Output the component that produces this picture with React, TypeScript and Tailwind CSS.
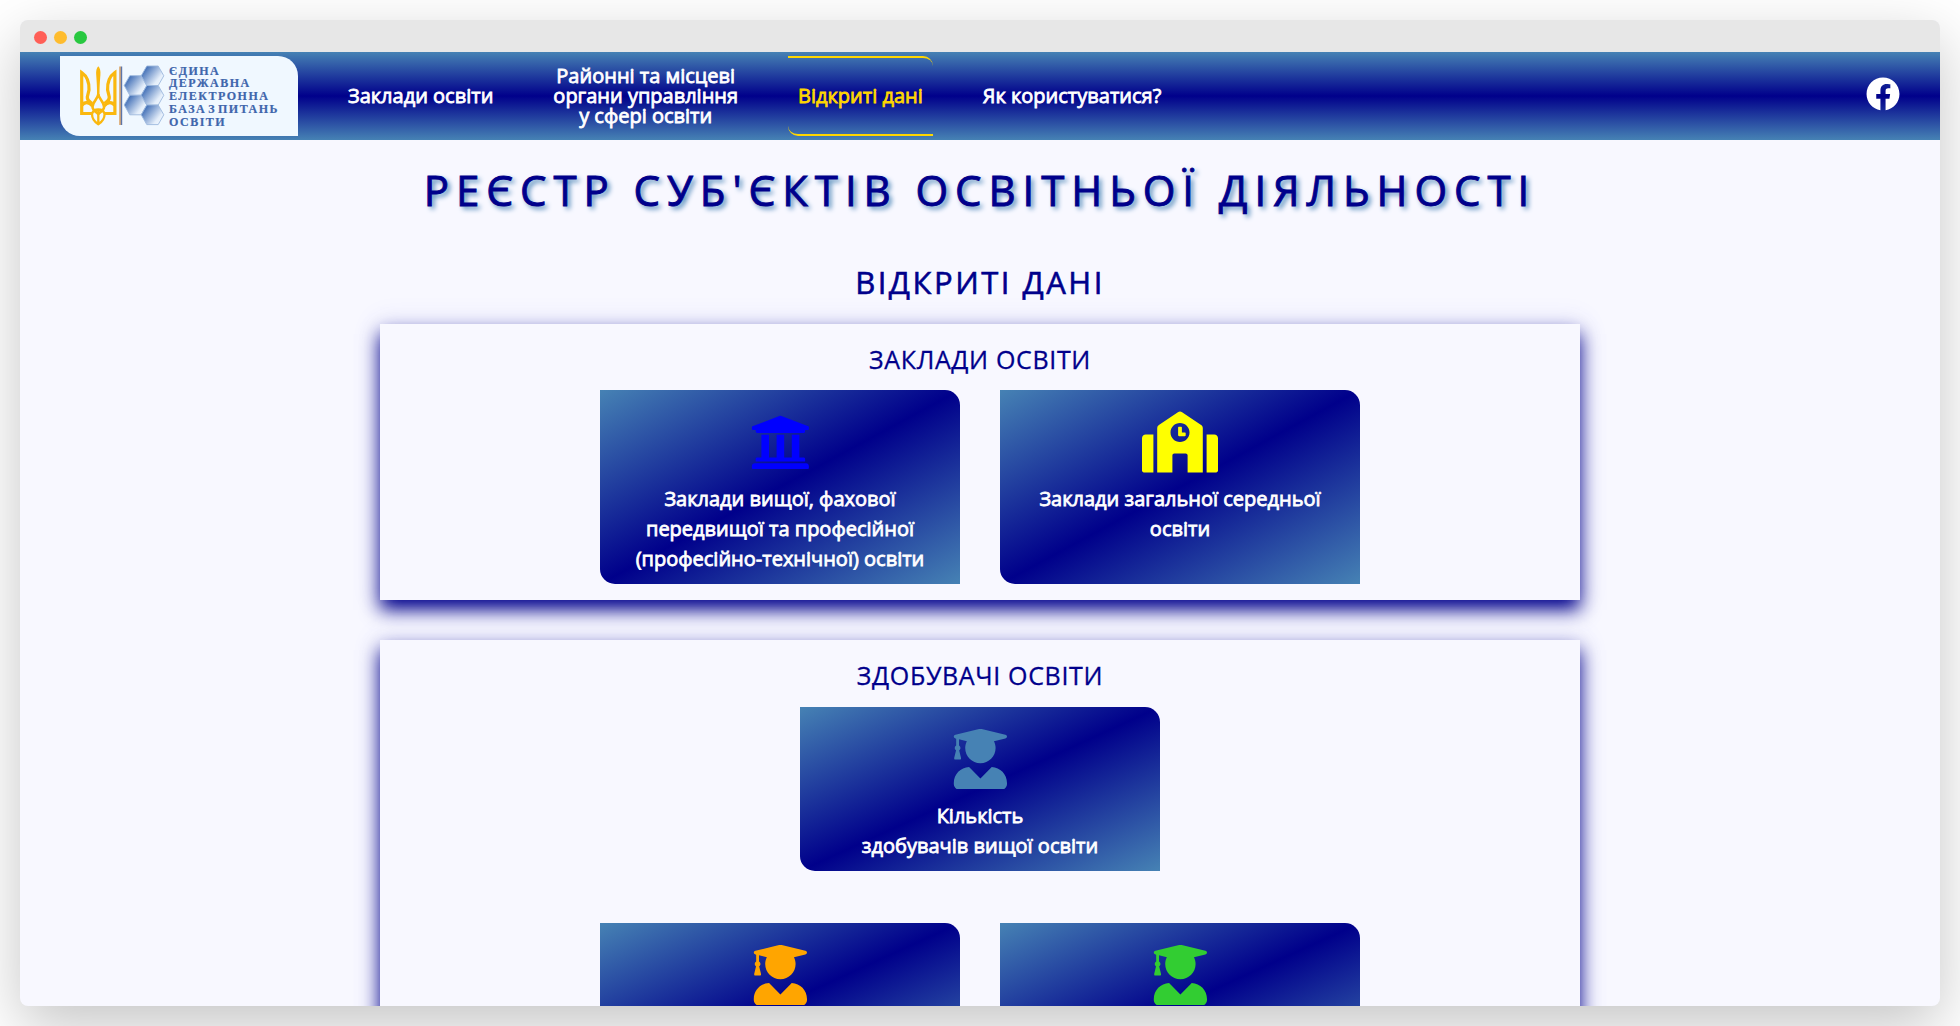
import type { ReactNode } from "react";
import { FaFacebook, FaSchool, FaUniversity, FaUserGraduate } from "react-icons/fa";

const HEXES = [
  [55.5, 20.5],
  [55.5, 40],
  [72.5, 10.8],
  [72.5, 30.3],
  [72.5, 49.8],
];

function Emblem() {
  return (
    <svg width="85" height="62" viewBox="0 0 85 62" className="shrink-0">
      <defs>
        <linearGradient id="hex" x1="0" y1="0.15" x2="1" y2="0.85">
          <stop offset="0.1" stopColor="#3f6db5" />
          <stop offset="0.75" stopColor="#e4eefa" />
          <stop offset="1" stopColor="#f2f8fe" />
        </linearGradient>
      </defs>
      <path
        d="M18.300 1.200C16.600 3 15.800 6 16.200 10C16.600 15 17.200 24 17 31H19.600C19.400 24 20 15 20.400 10C20.800 6 20 3 18.300 1.200Z"
        fill="#fab80f"
      />
      <g fill="none" stroke="#fab80f" strokeWidth="3.200" strokeLinejoin="miter">
        <path d="M18.300 29C18 34 12.500 37 12.500 42C12.500 45 16 47 18.300 49C20.600 47 24.100 45 24.100 42C24.100 37 18.600 34 18.300 29Z" strokeWidth="2.600" />
        <path d="M12.500 48.500H1.700V7.500C7.500 11.500 9.300 18 9 25L7.300 32C7 36 10.500 37 12 38.500M1.500 41C4 36.500 9 36.500 12.500 41" />
        <path d="M24.100 48.500H34.900V7.500C29.100 11.500 27.300 18 27.600 25L29.300 32C29.600 36 26.100 37 24.600 38.500M35.100 41C32.600 36.500 27.600 36.500 24.100 41" />
        <path d="M12 49C12 54 15.500 57.500 18.300 59.200C21.100 57.500 24.600 54 24.600 49C23 43 13.600 43 12 49ZM18.300 45V59" strokeWidth="2.300" />
      </g>
      <rect x="39.300" y="1.500" width="1.500" height="58.500" fill="#d79a55" />
      <rect x="40.800" y="1.500" width="1.400" height="58.500" fill="#5d76a8" />
      {HEXES.map(([x, y]) => (
        <path
          key={`${x}-${y}`}
          transform={`translate(${x} ${y})`}
          d="M-11.300 0L-5.700 -9.800H5.700L11.300 0L5.700 9.800H-5.700Z"
          fill="url(#hex)"
          stroke="#9db9de"
          strokeWidth="0.9"
        />
      ))}
    </svg>
  );
}

function Logo() {
  return (
    <a className="flex h-20 w-[238px] items-start rounded-tr-[20px] rounded-bl-[20px] bg-[aliceblue] pt-[9px] pl-5">
      <Emblem />
      <div className="-mt-[0.5px] ml-1 font-['Liberation_Serif',serif] text-[12px] leading-[12.8px] font-bold tracking-[1.5px] whitespace-nowrap text-[#3f66ac] [-webkit-text-stroke:0.2px_#3f66ac] [word-spacing:-2.5px]">
        <p>ЄДИНА</p>
        <p>ДЕРЖАВНА</p>
        <p>ЕЛЕКТРОННА</p>
        <p>БАЗА З ПИТАНЬ</p>
        <p>ОСВІТИ</p>
      </div>
    </a>
  );
}

function NavItem({ children, active = false }: { children: ReactNode; active?: boolean }) {
  return (
    <a
      className={
        active
          ? "flex h-20 items-center rounded-tr-[10px] rounded-bl-[10px] border-y-2 border-[gold] px-[10px] text-center text-[gold]"
          : "flex h-20 items-center px-[10px] text-center text-white"
      }
    >
      {children}
    </a>
  );
}

function Card({ icon, children }: { icon: ReactNode; children?: ReactNode }) {
  return (
    <a className="flex min-h-[164px] w-[360px] flex-col items-center rounded-tr-[15px] rounded-bl-[15px] bg-[linear-gradient(to_bottom_right,steelblue,darkblue,steelblue)] px-5 pt-[21.5px] pb-[10px] text-center text-[20px] leading-[30px] text-white">
      <span className="mb-[11.5px] flex h-[61px] items-center text-[60.8px]">{icon}</span>
      {children && <span className="[-webkit-text-stroke:0.8px_currentColor]">{children}</span>}
    </a>
  );
}

function Section({ title, children }: { title: string; children: ReactNode }) {
  return (
    <section className="mx-auto mb-10 w-[1200px] bg-[ghostwhite] pb-4 shadow-[0_10px_18px_darkblue,0_0_25px_3px_lavender]">
      <h3 className="h-[66px] pt-4 text-center text-[25px] leading-[38px] tracking-[0.66px] text-[darkblue] uppercase [-webkit-text-stroke:0.3px_currentColor]">
        {title}
      </h3>
      {children}
    </section>
  );
}

export default function App() {
  return (
    <div className="h-[1026px] overflow-hidden bg-white p-5 font-['Open_Sans','Noto_Sans',sans-serif]">
      <div className="flex h-[986px] flex-col overflow-hidden rounded-lg bg-[ghostwhite] shadow-[0_20px_60px_rgba(0,0,0,0.23)]">
        <div className="flex h-8 shrink-0 items-center gap-[7px] bg-[#e7e7e7] pt-[2px] pl-[13.5px]">
          <i className="size-[13px] rounded-full bg-[#ff5f57]" />
          <i className="size-[13px] rounded-full bg-[#febc2e]" />
          <i className="size-[13px] rounded-full bg-[#28c840]" />
        </div>

        <nav className="flex h-[88px] shrink-0 items-center bg-[linear-gradient(steelblue,darkblue,steelblue)] px-10 text-[20px] leading-5">
          <Logo />
          <div className="ml-10 flex gap-10 [-webkit-text-stroke:0.8px_currentColor]">
            <NavItem>Заклади освіти</NavItem>
            <NavItem>
              Районні та місцеві
              <br />
              органи управління
              <br />у сфері освіти
            </NavItem>
            <NavItem active>Відкриті дані</NavItem>
            <NavItem>Як користуватися?</NavItem>
          </div>
          <FaFacebook className="mb-1 ml-auto text-[34px] text-white" />
        </nav>

        <main className="text-center">
          <h1 className="mt-[20px] text-[42px] leading-[60px] tracking-[6.93px] text-[darkblue] uppercase [-webkit-text-stroke:0.9px_currentColor] [text-shadow:3px_3px_5px_steelblue]">
            Реєстр суб'єктів освітньої діяльності
          </h1>
          <h2 className="mt-[38px] mb-[18px] text-[31px] leading-[48px] tracking-[2.5px] text-[darkblue] uppercase [-webkit-text-stroke:0.6px_currentColor]">
            Відкриті дані
          </h2>

          <Section title="Заклади освіти">
            <div className="flex justify-center gap-10">
              <Card icon={<FaUniversity color="blue" />}>
                Заклади вищої, фахової передвищої та професійної (професійно-технічної) освіти
              </Card>
              <Card icon={<FaSchool color="yellow" size={76} />}>Заклади загальної середньої освіти</Card>
            </div>
          </Section>

          <Section title="Здобувачі освіти">
            <div className="mt-px flex justify-center">
              <Card icon={<FaUserGraduate color="steelblue" />}>
                Кількість
                <br />
                здобувачів вищої освіти
              </Card>
            </div>
            <div className="mt-[52px] flex justify-center gap-10">
              <Card icon={<FaUserGraduate color="orange" />} />
              <Card icon={<FaUserGraduate color="limegreen" />} />
            </div>
          </Section>
        </main>
      </div>
    </div>
  );
}
